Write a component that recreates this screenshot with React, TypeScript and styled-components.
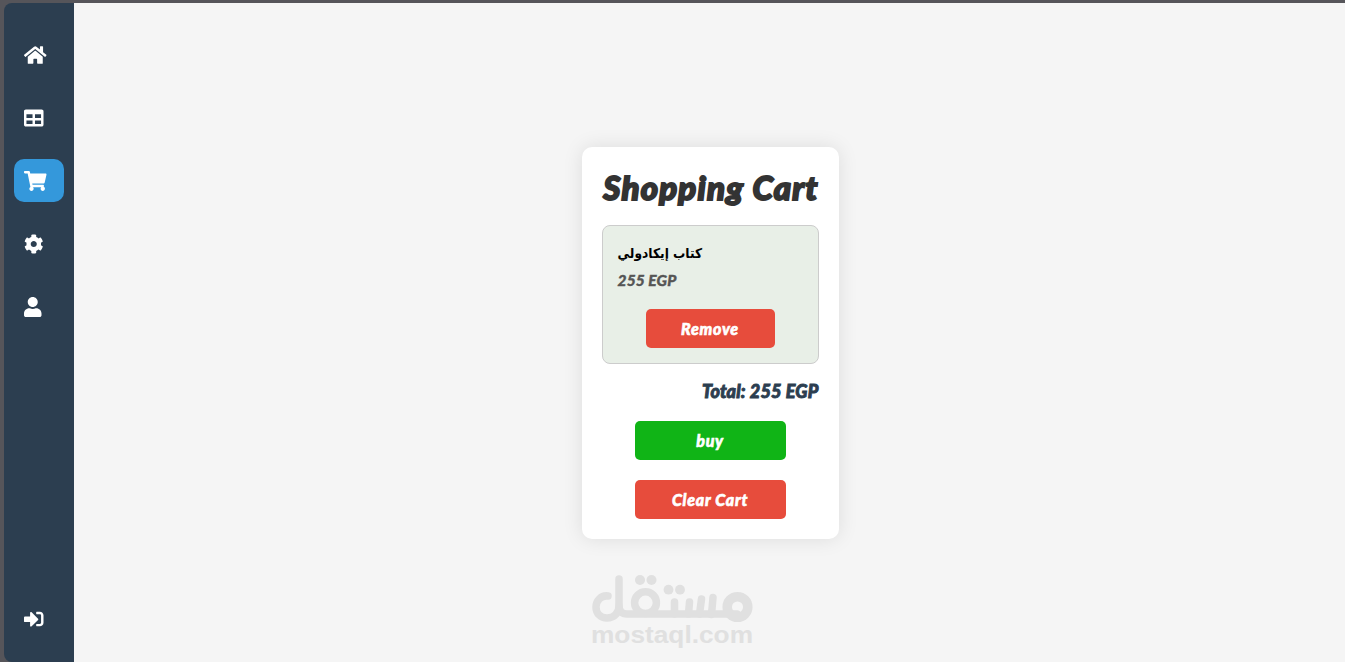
import * as React from 'react';
import styled, { createGlobalStyle } from 'styled-components';
import {
  FaCog,
  FaHome,
  FaShoppingCart,
  FaSignInAlt,
  FaTable,
  FaUser,
} from 'react-icons/fa';

const GlobalStyle = createGlobalStyle`
  * {
    box-sizing: border-box;
  }

  body {
    margin: 0;
    background: #56555a;
    font-family: Lato, 'Noto Sans', sans-serif;
    overflow: hidden;
  }
`;

const Page = styled.div`
  display: flex;
  height: 662px;
  padding: 3px 0 0 4px;
`;

const Sidebar = styled.nav`
  display: flex;
  flex-direction: column;
  gap: 20px;
  width: 70px;
  padding: 30px 10px 22px;
  background: #2c3e50;
  border-radius: 8px 0 0 8px;
`;

const NavItem = styled.a<{
  $iconWidth: number;
  $active?: boolean;
  $last?: boolean;
}>`
  display: flex;
  align-items: center;
  height: 43px;
  padding: 0 10px;
  margin-top: ${(props) => (props.$last ? 'auto' : '0')};
  border-radius: 10px;
  background: ${(props) => (props.$active ? '#3498db' : 'transparent')};
  color: #fff;
  font-size: 20px;

  svg {
    flex-shrink: 0;
    width: ${(props) => props.$iconWidth}px;
  }
`;

const Main = styled.main`
  display: flex;
  flex: 1;
  flex-direction: column;
  align-items: center;
  padding: 144px 0 0 1px;
  background: #f5f5f5;
`;

const Card = styled.section`
  width: 257px;
  height: 392px;
  padding: 20px;
  background: #fff;
  border-radius: 10px;
  box-shadow: 0 0 20px rgba(0, 0, 0, 0.1);
`;

const Title = styled.h1`
  display: flex;
  justify-content: center;
  height: 58px;
  margin: 0;
  padding-left: 2px;
  color: #333;
  font-size: 33px;
  font-style: italic;
  font-weight: 900;
  line-height: 41px;
  letter-spacing: 1.2px;
  white-space: nowrap;
  -webkit-text-stroke: 1.9px #333;
`;

const CartItem = styled.article`
  height: 139px;
  padding: 15px;
  background: #e8efe7;
  border: 1px solid #ccc;
  border-radius: 8px;
`;

const ItemName = styled.h3`
  width: max-content;
  margin: 0;
  color: #000;
  font-family: 'DejaVu Sans Condensed', 'DejaVu Sans', sans-serif;
  font-size: 13.6px;
  font-stretch: condensed;
  font-weight: 700;
  line-height: 24px;
`;

const Price = styled.p`
  margin: 2px 0 15px;
  color: #555;
  font-size: 15.5px;
  font-style: italic;
  font-weight: 900;
  letter-spacing: 0.15px;
  line-height: 27px;
  -webkit-text-stroke: 0.4px #555;
`;

const Button = styled.button<{ $color?: string; $width: number }>`
  display: block;
  width: ${(props) => props.$width}px;
  height: 39px;
  margin: 0 auto 20px;
  padding: 0;
  border: 0;
  border-radius: 5px;
  background: ${(props) => props.$color ?? '#e74c3c'};
  color: #fff;
  font-family: inherit;
  font-size: 16px;
  font-style: italic;
  font-weight: 900;
  letter-spacing: 0.75px;
  line-height: 39px;
  -webkit-text-stroke: 0.6px #fff;
`;

const Total = styled.p`
  margin: 15px 0 18px;
  color: #2c3e50;
  font-size: 18px;
  font-style: italic;
  font-weight: 900;
  letter-spacing: 0.2px;
  line-height: 24px;
  text-align: right;
  white-space: nowrap;
  -webkit-text-stroke: 0.9px #2c3e50;
`;

const Watermark = styled.svg`
  flex-shrink: 0;
  width: 170px;
  height: 82px;
  margin: 31px 76px 0 0;
`;

const navItems = [
  { name: 'home', icon: <FaHome />, width: 22.5 },
  { name: 'table', icon: <FaTable />, width: 19.5 },
  { name: 'cart', icon: <FaShoppingCart />, width: 22.5, active: true },
  { name: 'settings', icon: <FaCog />, width: 19.5 },
  { name: 'profile', icon: <FaUser />, width: 17.5 },
];

const MostaqlLogo: React.FC = () => (
  <Watermark viewBox="0 0 170 82">
    <g fill="none" stroke="#e0e0e0" strokeWidth="7.5" strokeLinecap="round">
      <path d="M21 26C14 25 9 31 9 37c0 7 5 11 11 11 7 0 12-5 12-12V9" />
      <path d="M32 36c0 5 3 8 8 8h110" />
      <circle cx="58.500" cy="32.700" r="10.900" />
      <circle cx="150.500" cy="37" r="10.300" strokeWidth="9.500" />
      <path d="M87.500 32v12M102.500 32l-1 12M114.500 29l-2 15M126 27.500l-1.500 17" />
    </g>
    <g fill="#e0e0e0">
      <circle cx="53" cy="10" r="5" />
      <circle cx="64.500" cy="10" r="5" />
      <circle cx="81.500" cy="19.700" r="4.900" />
      <circle cx="93" cy="19.700" r="4.900" />
      <text
        x="4"
        y="73"
        textLength="162"
        lengthAdjust="spacingAndGlyphs"
        fontFamily="Liberation Sans, sans-serif"
        fontSize="24"
        fontWeight="700"
      >
        mostaql.com
      </text>
    </g>
  </Watermark>
);

const App: React.FC = () => {
  return (
    <>
      <GlobalStyle />
      <Page>
        <Sidebar>
          {navItems.map((item) => (
            <NavItem
              key={item.name}
              $iconWidth={item.width}
              $active={item.active}
            >
              {item.icon}
            </NavItem>
          ))}
          <NavItem $iconWidth={19.5} $last>
            <FaSignInAlt />
          </NavItem>
        </Sidebar>
        <Main>
          <Card>
            <Title>Shopping Cart</Title>
            <CartItem>
              <ItemName dir="rtl">كتاب إيكادولي</ItemName>
              <Price>255 EGP</Price>
              <Button $width={129}>Remove</Button>
            </CartItem>
            <Total>Total: 255 EGP</Total>
            <Button $width={151} $color="#10b416">
              buy
            </Button>
            <Button $width={151}>Clear Cart</Button>
          </Card>
          <MostaqlLogo />
        </Main>
      </Page>
    </>
  );
};

export default App;
